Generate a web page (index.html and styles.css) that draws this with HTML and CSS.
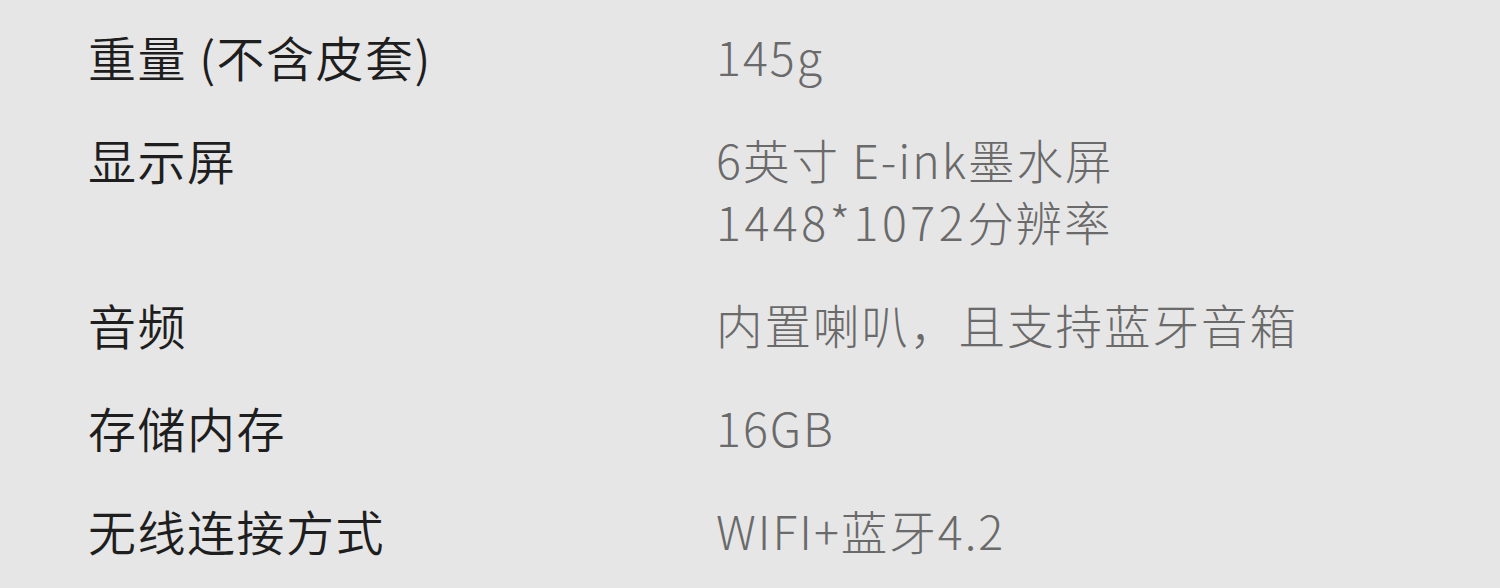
FILE: index.html
```html
<!DOCTYPE html>
<html lang="zh-CN">
<head>
  <meta charset="UTF-8">
  <meta name="viewport" content="width=device-width, initial-scale=1.0">
  <title>产品参数</title>
  <link rel="stylesheet" href="styles.css">
</head>
<body>

<div class="specs">
  <div class="spec-row">
    <div class="spec-name">重量 (不含皮套)</div>
    <div class="spec-value">145g</div>
  </div>
  <div class="spec-row">
    <div class="spec-name">显示屏</div>
    <div class="spec-value">
      <div>6英寸 E-ink墨水屏</div>
      <div><span class="num">1448*1072</span>分辨率</div>
    </div>
  </div>
  <div class="spec-row">
    <div class="spec-name">音频</div>
    <div class="spec-value">内置喇叭，且支持蓝牙音箱</div>
  </div>
  <div class="spec-row">
    <div class="spec-name">存储内存</div>
    <div class="spec-value">16GB</div>
  </div>
  <div class="spec-row">
    <div class="spec-name">无线连接方式</div>
    <div class="spec-value">WIFI+蓝牙4.2</div>
  </div>
</div>

</body>
</html>
```

FILE: styles.css
```css
body {
    margin: 0;
    background-color: #e6e6e6;
    font-family: "Noto Sans CJK SC", "Noto Sans", sans-serif;
}
.specs {
    display: flex;
    flex-direction: column;
    gap: 41px;
    padding: 25px 0 0 88px;
}
.spec-row {
    display: grid;
    grid-template-columns: 628px 1fr;
    line-height: 62px;
}
.spec-name {
    color: #1e1e1e;
    font-size: 48px;
    font-weight: 350;
    letter-spacing: 1.5px;
}
.spec-value {
    color: #6a6a6a;
    font-size: 46.5px;
    font-weight: 300;
    letter-spacing: 2px;
}
.num {
    letter-spacing: 3.5px;
}
```
